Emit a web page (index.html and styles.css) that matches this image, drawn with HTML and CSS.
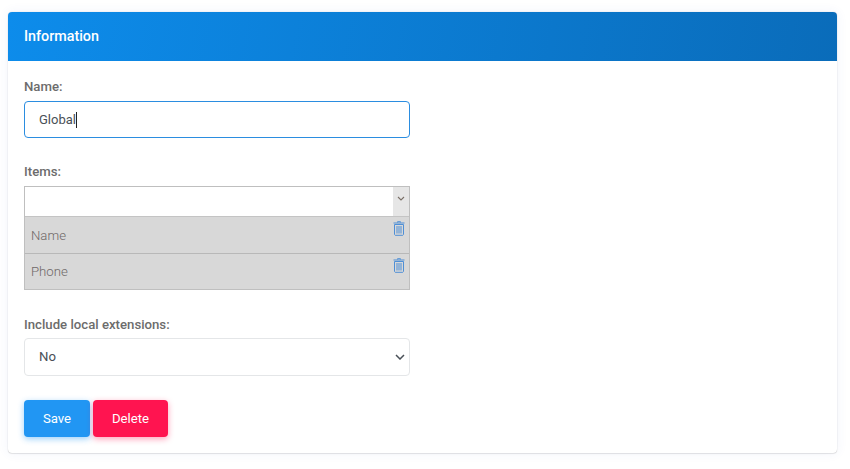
FILE: index.html
```html
<!DOCTYPE html>
<html lang="en">
<head>
  <meta charset="UTF-8">
  <title>Information</title>
  <link rel="stylesheet" href="styles.css">
</head>
<body>
  <div class="card">
    <div class="card-header">Information</div>
    <div class="card-body">
      <div class="field field-name">
        <label class="field-label">Name:</label>
        <div class="text-input">Global<span class="caret"></span></div>
      </div>
      <div class="field field-items">
        <label class="field-label">Items:</label>
        <div class="multi">
          <div class="multi-top">
            <div class="multi-search"></div>
            <div class="multi-arrow">
              <svg width="8" height="5" viewBox="0 0 8 5"><path d="M1 1l3 3 3-3" fill="none" stroke="#7a7068" stroke-width="1.1"/></svg>
            </div>
          </div>
          <div class="multi-item">
            <span>Name</span>
            <svg class="trash" width="12" height="15" viewBox="0 0 12 15"><path d="M4.500 1.500V.7h3v.8M.5 2h11M1.500 3.500v10l.7.800h7.600l.7-.8v-10zM4 5v7.500M6 5v7.500M8 5v7.500" fill="none" stroke="#4f8fd6" stroke-width="1"/></svg>
          </div>
          <div class="multi-item">
            <span>Phone</span>
            <svg class="trash" width="12" height="15" viewBox="0 0 12 15"><path d="M4.500 1.500V.7h3v.8M.5 2h11M1.500 3.500v10l.7.800h7.600l.7-.8v-10zM4 5v7.500M6 5v7.500M8 5v7.500" fill="none" stroke="#4f8fd6" stroke-width="1"/></svg>
          </div>
        </div>
      </div>
      <div class="field field-local">
        <label class="field-label">Include local extensions:</label>
        <div class="select-box">
          <span>No</span>
          <svg width="10" height="6" viewBox="0 0 10 6"><path d="M1 1l4 4 4-4" fill="none" stroke="#495057" stroke-width="1.500"/></svg>
        </div>
      </div>
      <div class="actions">
        <button class="btn btn-save">Save</button>
        <button class="btn btn-delete">Delete</button>
      </div>
    </div>
  </div>
</body>
</html>
```

FILE: styles.css
```css
html, body {
  height: 100%;
}
body {
  margin: 0;
  padding: 12px 13px 0 8px;
  box-sizing: border-box;
  background-color: #fff;
  font-family: Roboto, "Liberation Sans", sans-serif;
  overflow: hidden;
}
.card {
  height: 441px;
  box-sizing: border-box;
  background-color: #fff;
  border-radius: 4px;
  box-shadow: 0 0 1px rgba(0, 0, 0, 0.25), 0 1px 1px rgba(0, 0, 0, 0.08), 0 0 12px rgba(60, 90, 200, 0.07);
  overflow: hidden;
}
.card-header {
  height: 49px;
  padding: 0 16px 2px;
  box-sizing: border-box;
  display: flex;
  align-items: center;
  background-image: linear-gradient(100deg, #0d8ceb, #0a6cba);
  color: #fff;
  font-size: 14.3px;
  font-weight: 500;
}
.card-body {
  padding: 18px 16px 0;
}
.field {
  width: 386px;
}
.field-label {
  display: block;
  height: 16px;
  line-height: 16px;
  margin-bottom: 6px;
  color: #6c6c6c;
  font-size: 13.2px;
  font-weight: 500;
}
.field-items {
  margin-top: 26px;
}
.field-local {
  margin-top: 27px;
}
.field-local .field-label {
  margin-bottom: 5px;
}
.text-input {
  height: 37px;
  box-sizing: border-box;
  padding: 0 14px;
  display: flex;
  align-items: center;
  border: 1px solid #2b8de0;
  border-radius: 4px;
  color: #495057;
  font-size: 13px;
}
.caret {
  width: 1px;
  height: 16px;
  background-color: #222;
}
.multi {
  border: 1px solid #bfbfbf;
}
.multi-top {
  height: 29px;
  display: flex;
  border-bottom: 1px solid #c4c4c4;
}
.multi-search {
  flex: 1;
}
.multi-arrow {
  width: 16px;
  display: flex;
  justify-content: center;
  padding-top: 9px;
  box-sizing: border-box;
  background-color: #e6e6e6;
}
.multi-arrow svg {
  display: block;
}
.multi-item {
  height: 36px;
  padding: 0 4px 0 6px;
  display: flex;
  justify-content: space-between;
  background-color: #d8d8d8;
  color: #6f6868;
  font-size: 13.2px;
  font-weight: 300;
  border-bottom: 1px solid #b8b8b8;
}
.multi-item:last-child {
  height: 35px;
  border-bottom: 0;
}
.multi-item span {
  padding-top: 11px;
}
.multi-item:last-child span {
  padding-top: 10px;
}
.trash {
  margin-top: 4px;
}
.select-box {
  height: 38px;
  box-sizing: border-box;
  padding: 0 4px 1px 14px;
  display: flex;
  align-items: center;
  justify-content: space-between;
  border: 1px solid #e4e6e8;
  border-radius: 4px;
  color: #495057;
  font-size: 13.2px;
}
.actions {
  margin-top: 24px;
  display: flex;
  gap: 3px;
}
.btn {
  height: 37px;
  padding: 0;
  border: 0;
  border-radius: 4px;
  color: #fff;
  font-family: inherit;
  font-size: 13.2px;
}
.btn-save {
  width: 66px;
  background-color: #2196f3;
  box-shadow: 0 2px 6px rgba(33, 150, 243, 0.45);
}
.btn-delete {
  width: 75px;
  background-color: #ff1450;
  box-shadow: 0 2px 6px rgba(255, 20, 80, 0.4);
}
```
